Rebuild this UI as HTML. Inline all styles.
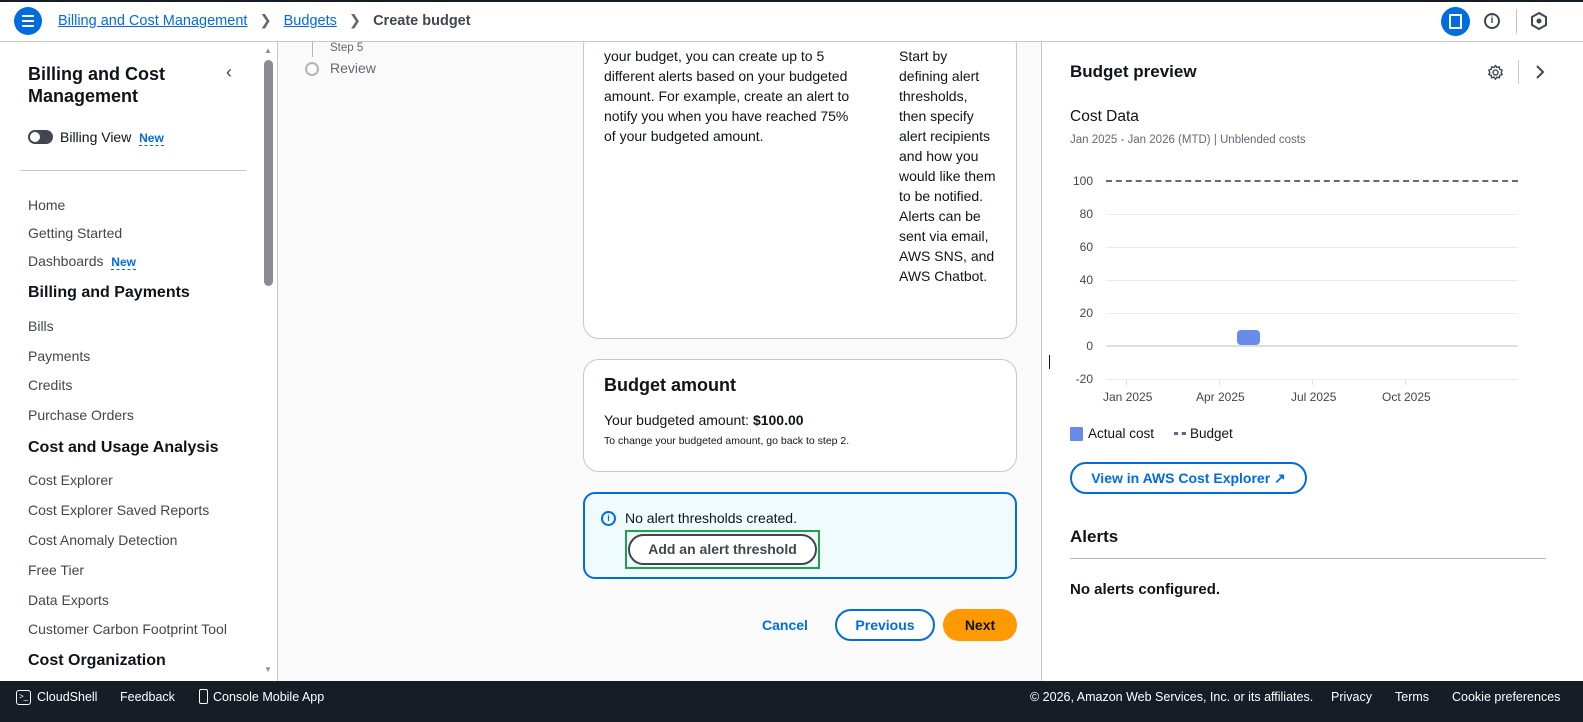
<!DOCTYPE html>
<html><head><meta charset="utf-8"><style>
*{box-sizing:border-box;margin:0;padding:0}
body{width:1583px;height:722px;overflow:hidden;font-family:"Liberation Sans",sans-serif;color:#0f141a;background:#fff;position:relative;font-size:14px}
.a{position:absolute;white-space:nowrap}
a{color:#006ce0}
.nav{font-size:14px;color:#424650}
.h{font-weight:bold;font-size:16px;color:#0f141a}
.new{color:#006ce0;font-weight:bold;font-size:12px;border-bottom:1px dashed #006ce0}
.card{position:absolute;background:#fff;border:1px solid #c6c6cd;border-radius:16px}
.mt{font-size:14px;line-height:20px;color:#0f141a}
.gl{position:absolute;left:1106px;width:412px;height:1px;background:#e9ebed}
.yl{position:absolute;width:30px;text-align:right;left:1063px;font-size:12px;color:#424650}
.xl{position:absolute;font-size:12px;color:#424650}
.btn{position:absolute;border-radius:20px;font-weight:bold;font-size:14px;text-align:center}
.ft{position:absolute;top:690px;color:#fff;font-size:12.5px}
</style></head><body>
<div class="a" style="left:278px;top:42px;width:763px;height:639px;background:#fafafa"></div>
<div class="card" style="left:583px;top:30px;width:434px;height:309px"></div>
<div class="a" style="left:0;top:0;width:1583px;height:42px;background:#fff"></div>
<div class="a" style="left:0;top:0;width:1583px;height:2px;background:#161d26"></div>
<div class="a" style="left:0;top:41px;width:1583px;height:1px;background:#c6c6cd"></div>
<div class="a" style="left:14px;top:7px;width:28px;height:28px;border-radius:50%;background:#006ce0"></div>
<div class="a" style="left:22px;top:15px;width:12px;height:2px;background:#fff;box-shadow:0 5px 0 #fff,0 10px 0 #fff"></div>
<div class="a" style="left:58px;top:13px;font-size:14.5px"><a style="text-decoration:underline">Billing and Cost Management</a> <span style="color:#656871;margin:0 8px">&#x276F;</span> <a style="text-decoration:underline">Budgets</a> <span style="color:#656871;margin:0 8px">&#x276F;</span> <b style="color:#424650">Create budget</b></div>
<div class="a" style="left:1441px;top:7px;width:29px;height:29px;border-radius:50%;background:#006ce0"></div>
<div class="a" style="left:1449px;top:14px;width:13px;height:15px;border:2px solid #fff"></div>
<div class="a" style="left:1484px;top:13px;width:16px;height:16px;border:2px solid #424650;border-radius:50%;font-size:10px;font-weight:bold;text-align:center;line-height:12px;color:#424650">i</div>
<div class="a" style="left:1516px;top:9px;width:1px;height:25px;background:#c6c6cd"></div>
<svg class="a" style="left:1530px;top:11px" width="18" height="20" viewBox="0 0 18 20"><path d="M9 2 L16 6 L16 14 L9 18 L2 14 L2 6 Z" fill="none" stroke="#424650" stroke-width="2"/><circle cx="9" cy="10" r="2.5" fill="#424650"/></svg>

<div class="a" style="left:277px;top:42px;width:1px;height:639px;background:#c6c6cd"></div>
<div class="a" style="left:264px;top:60px;width:9px;height:226px;border-radius:5px;background:#8c8c94"></div>
<div class="a" style="left:264px;top:46px;font-size:8px;color:#8c8c94">▲</div>
<div class="a" style="left:264px;top:665px;font-size:8px;color:#8c8c94">▼</div>
<div class="a" style="left:28px;top:63px;font-size:18px;font-weight:bold;line-height:22px">Billing and Cost<br>Management</div>
<div class="a" style="left:226px;top:62px;font-size:18px;color:#424650">&#x2039;</div>
<div class="a" style="left:28px;top:130px;width:25px;height:14px;border-radius:7px;background:#424650"></div>
<div class="a" style="left:30px;top:132px;width:10px;height:10px;border-radius:50%;background:#fff"></div>
<div class="a" style="left:60px;top:129px;font-size:14px">Billing View &nbsp;<span class="new">New</span></div>
<div class="a" style="left:20px;top:170px;width:226px;height:1px;background:#c6c6cd"></div>
<div class="a nav" style="left:28px;top:197px">Home</div>
<div class="a nav" style="left:28px;top:225px">Getting Started</div>
<div class="a nav" style="left:28px;top:253px">Dashboards &nbsp;<span class="new">New</span></div>
<div class="a h" style="left:28px;top:284px">Billing and Payments</div>
<div class="a nav" style="left:28px;top:318px">Bills</div>
<div class="a nav" style="left:28px;top:348px">Payments</div>
<div class="a nav" style="left:28px;top:377px">Credits</div>
<div class="a nav" style="left:28px;top:407px">Purchase Orders</div>
<div class="a h" style="left:28px;top:439px">Cost and Usage Analysis</div>
<div class="a nav" style="left:28px;top:472px">Cost Explorer</div>
<div class="a nav" style="left:28px;top:502px">Cost Explorer Saved Reports</div>
<div class="a nav" style="left:28px;top:532px">Cost Anomaly Detection</div>
<div class="a nav" style="left:28px;top:562px">Free Tier</div>
<div class="a nav" style="left:28px;top:592px">Data Exports</div>
<div class="a nav" style="left:28px;top:621px">Customer Carbon Footprint Tool</div>
<div class="a h" style="left:28px;top:652px">Cost Organization</div>

<div class="a" style="left:312px;top:42px;width:1px;height:15px;background:#b4b4bb"></div>
<div class="a" style="left:330px;top:42px;font-size:11.5px;color:#656871">Step 5</div>
<div class="a" style="left:305px;top:62px;width:14px;height:14px;border:2px solid #b4b4bb;border-radius:50%"></div>
<div class="a" style="left:330px;top:60px;font-size:14px;color:#656871">Review</div>

<div class="a mt" style="left:604px;top:46px;white-space:normal;width:258px">your budget, you can create up to 5 different alerts based on your budgeted amount. For example, create an alert to notify you when you have reached 75% of your budgeted amount.</div>
<div class="a mt" style="left:899px;top:46px;white-space:normal;width:97px">Start by defining alert thresholds, then specify alert recipients and how you would like them to be notified. Alerts can be sent via email, AWS SNS, and AWS Chatbot.</div>

<div class="card" style="left:583px;top:359px;width:434px;height:113px"></div>
<div class="a" style="left:604px;top:375px;font-size:18px;font-weight:bold">Budget amount</div>
<div class="a" style="left:604px;top:412px;font-size:14px">Your budgeted amount: <b>$100.00</b></div>
<div class="a" style="left:604px;top:435px;font-size:10.5px;color:#0f141a">To change your budgeted amount, go back to step 2.</div>

<div class="a" style="left:583px;top:492px;width:434px;height:87px;border:2px solid #006ce0;border-radius:12px;background:#f0fbff"></div>
<div class="a" style="left:601px;top:511px;width:15px;height:15px;border:2px solid #006ce0;border-radius:50%;color:#006ce0;font-size:9px;font-weight:bold;text-align:center;line-height:11px">i</div>
<div class="a" style="left:625px;top:510px;font-size:14px">No alert thresholds created.</div>
<div class="a" style="left:625px;top:530px;width:195px;height:39px;border:2px solid #1ea446"></div>
<div class="btn" style="left:628px;top:534px;width:189px;height:31px;border:2px solid #424650;color:#424650;line-height:27px;background:#fff">Add an alert threshold</div>

<div class="a" style="left:762px;top:617px;font-weight:bold;color:#006ce0;font-size:14px">Cancel</div>
<div class="btn" style="left:835px;top:609px;width:100px;height:32px;border:2px solid #006ce0;color:#006ce0;line-height:28px;background:#fff">Previous</div>
<div class="btn" style="left:943px;top:609px;width:74px;height:32px;background:#ff9900;color:#0f141a;line-height:32px">Next</div>

<div class="a" style="left:1041px;top:42px;width:1px;height:639px;background:#c6c6cd"></div>
<div class="a" style="left:1070px;top:62px;font-size:17px;font-weight:bold">Budget preview</div>
<svg class="a" style="left:1487px;top:64px" width="17" height="17" viewBox="0 0 24 24"><path d="M12 2 l2 3 3.5-1 0.5 3.5 3.5 1-1.5 3.5 1.5 3-3.5 1-0.5 3.5-3.5-1-2 3-2-3-3.5 1-0.5-3.5-3.5-1 1.5-3-1.5-3.5 3.5-1 0.5-3.5 3.5 1z" fill="none" stroke="#424650" stroke-width="2" stroke-linejoin="round"/><circle cx="12" cy="12" r="3.5" fill="none" stroke="#424650" stroke-width="2"/></svg>
<div class="a" style="left:1518px;top:60px;width:1px;height:24px;background:#c6c6cd"></div>
<svg class="a" style="left:1534px;top:64px" width="12" height="16" viewBox="0 0 12 16"><path d="M3 2 L9 8 L3 14" fill="none" stroke="#424650" stroke-width="2"/></svg>
<div class="a" style="left:1070px;top:108px;font-size:15.5px">Cost Data</div>
<div class="a" style="left:1070px;top:134px;font-size:11.5px;color:#656871">Jan 2025 - Jan 2026 (MTD) | Unblended costs</div>

<div class="a" style="left:1106px;top:180px;width:412px;border-top:2px dashed #5f6b7a"></div>
<div class="gl" style="top:214px"></div><div class="gl" style="top:247px"></div><div class="gl" style="top:280px"></div><div class="gl" style="top:313px"></div><div class="gl" style="top:345px;height:2px;background:#dcdfe3"></div><div class="gl" style="top:379px"></div>
<div class="yl" style="top:174px">100</div><div class="yl" style="top:207px">80</div><div class="yl" style="top:240px">60</div><div class="yl" style="top:273px">40</div><div class="yl" style="top:306px">20</div><div class="yl" style="top:339px">0</div><div class="yl" style="top:372px">-20</div>
<div class="a" style="left:1237px;top:330px;width:23px;height:15px;border-radius:4px;background:#688ae8"></div>
<div class="a" style="left:1049px;top:355px;width:1px;height:14px;background:#0f141a"></div>
<div class="a" style="left:1126px;top:380px;width:1px;height:5px;background:#dcdfe3"></div>
<div class="a" style="left:1219px;top:380px;width:1px;height:5px;background:#dcdfe3"></div>
<div class="a" style="left:1312px;top:380px;width:1px;height:5px;background:#dcdfe3"></div>
<div class="a" style="left:1405px;top:380px;width:1px;height:5px;background:#dcdfe3"></div>
<div class="xl" style="left:1103px;top:390px">Jan 2025</div>
<div class="xl" style="left:1196px;top:390px">Apr 2025</div>
<div class="xl" style="left:1291px;top:390px">Jul 2025</div>
<div class="xl" style="left:1382px;top:390px">Oct 2025</div>
<div class="a" style="left:1070px;top:427px;width:13px;height:14px;background:#688ae8;border-radius:1px"></div>
<div class="a" style="left:1088px;top:426px;font-size:13.5px">Actual cost</div>
<div class="a" style="left:1174px;top:432px;width:12px;border-top:3px dotted #5f6b7a"></div>
<div class="a" style="left:1190px;top:426px;font-size:13.5px">Budget</div>
<div class="btn" style="left:1070px;top:462px;width:237px;height:32px;border:2px solid #006ce0;color:#006ce0;line-height:28px">View in AWS Cost Explorer &#x2197;</div>
<div class="a" style="left:1070px;top:527px;font-size:17px;font-weight:bold">Alerts</div>
<div class="a" style="left:1070px;top:558px;width:476px;height:1px;background:#b4b4bb"></div>
<div class="a" style="left:1070px;top:581px;font-size:15px;font-weight:bold">No alerts configured.</div>

<div class="a" style="left:0;top:681px;width:1583px;height:41px;background:#161d26"></div>
<div class="a" style="left:16px;top:690px;width:15px;height:15px;border:1.5px solid #fff;border-radius:3px;color:#fff;font-size:8px;line-height:12px;padding-left:2px">&gt;_</div>
<div class="ft" style="left:37px">CloudShell</div>
<div class="ft" style="left:120px">Feedback</div>
<div class="a" style="left:199px;top:689px;width:9px;height:15px;border:1.5px solid #fff;border-radius:2px"></div>
<div class="ft" style="left:213px">Console Mobile App</div>
<div class="ft" style="left:1030px">© 2026, Amazon Web Services, Inc. or its affiliates.</div>
<div class="ft" style="left:1331px">Privacy</div>
<div class="ft" style="left:1395px">Terms</div>
<div class="ft" style="left:1452px">Cookie preferences</div>
</body></html>
